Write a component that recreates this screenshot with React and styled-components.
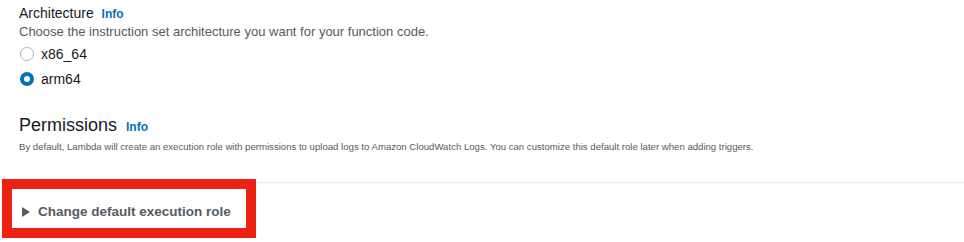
import React, { useState } from 'react';
import styled, { createGlobalStyle } from 'styled-components';

const GlobalStyle = createGlobalStyle`
    body {
        margin: 0;
        background: #ffffff;
        font-family: "Liberation Sans", Arial, sans-serif;
        color: #16191f;
    }
`

export default function App() {
    var [arch, setArch] = useState('arm64');

    return (
        <Page>
            <GlobalStyle />
            <Section>
                <Label>Architecture <Info>Info</Info></Label>
                <Hint>Choose the instruction set architecture you want for your function code.</Hint>
                <RadioList>
                    {['x86_64', 'arm64'].map((a) => (
                        <RadioRow key={a} onClick={() => setArch(a)}>
                            <RadioDot checked={arch === a} />
                            <span>{a}</span>
                        </RadioRow>
                    ))}
                </RadioList>
            </Section>
            <Header>
                <Title>Permissions <Info>Info</Info></Title>
                <Description>
                    By default, Lambda will create an execution role with permissions to upload logs to Amazon CloudWatch Logs. You can customize this default role later when adding triggers.
                </Description>
            </Header>
            <Divider />
            <Expander>
                <Caret />
                Change default execution role
                <Highlight />
            </Expander>
        </Page>
    );
}

const Page = styled.div`
    width: 964px;
    height: 242px;
    position: relative;
    overflow: hidden;
`

const Section = styled.div`
    padding: 4px 0 0 19px;
`

const Label = styled.div`
    font-size: 14px;
    line-height: 18px;
    color: #16191f;
`

const Info = styled.span`
    font-size: 12px;
    font-weight: bold;
    color: #0073bb;
    margin-left: 4px;
`

const Hint = styled.div`
    font-size: 13px;
    line-height: 16px;
    color: #545b64;
    margin-top: 1px;
`

const RadioList = styled.div`
    display: flex;
    flex-direction: column;
    gap: 7px;
    margin-top: 5px;
`

const RadioRow = styled.label`
    display: flex;
    align-items: center;
    gap: 7px;
    font-size: 14px;
    line-height: 18px;
    color: #16191f;
    cursor: pointer;
`

const RadioDot = styled.span`
    width: 14px;
    height: 14px;
    box-sizing: border-box;
    border-radius: 50%;
    margin-left: 1px;
    border: ${p => p.checked ? '4px solid #0073bb' : '1.5px solid #aab7b8'};
    background: #fff;
`

const Header = styled.div`
    padding: 25px 0 0 19px;
`

const Title = styled.div`
    font-size: 18px;
    line-height: 24px;
    color: #16191f;
`

const Description = styled.div`
    font-size: 9.6px;
    line-height: 14px;
    color: #545b64;
    margin-top: 1px;
`

const Divider = styled.div`
    height: 1px;
    background: #eaeded;
    margin-top: 28px;
`

const Expander = styled.div`
    position: relative;
    display: flex;
    align-items: center;
    gap: 8px;
    margin: 20px 0 0 22px;
    font-size: 13.5px;
    font-weight: bold;
    line-height: 18px;
    color: #545b64;
`

const Caret = styled.span`
    width: 0;
    height: 0;
    border-top: 5px solid transparent;
    border-bottom: 5px solid transparent;
    border-left: 8px solid #545b64;
`

const Highlight = styled.span`
    position: absolute;
    left: -20px;
    top: -24px;
    width: 234px;
    height: 39px;
    border: 10px solid #ee2211;
    pointer-events: none;
`
